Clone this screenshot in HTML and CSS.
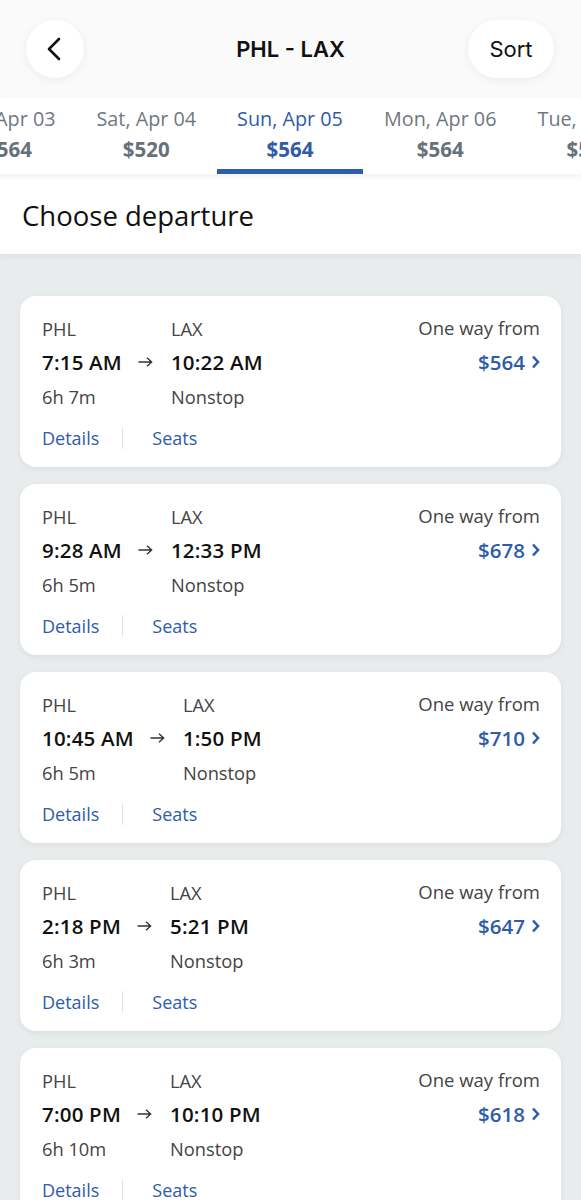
FILE: index.html
```html
<!DOCTYPE html>
<html>
<head>
<meta charset="utf-8">
<link rel="stylesheet" href="styles.css">
</head>
<body>
<div class="page">
  <header class="topbar">
    <button class="back" aria-label="Back">
      <svg width="20" height="26" viewBox="0 0 20 26"><path d="M14 3 L4 13 L14 23" fill="none" stroke="#111" stroke-width="2.6" stroke-linecap="round" stroke-linejoin="round"/></svg>
    </button>
    <div class="title">PHL - LAX</div>
    <button class="sort">Sort</button>
  </header>
  <nav class="tabs">
    <div class="tabtrack">
      <div class="tab"><span class="d">Fri, Apr 03</span><span class="p">$564</span></div>
      <div class="tab"><span class="d">Sat, Apr 04</span><span class="p">$520</span></div>
      <div class="tab active"><span class="d">Sun, Apr 05</span><span class="p">$564</span></div>
      <div class="tab"><span class="d">Mon, Apr 06</span><span class="p">$564</span></div>
      <div class="tab"><span class="d">Tue, Apr 07</span><span class="p">$564</span></div>
    </div>
  </nav>
  <section class="choose"><h1>Choose departure</h1></section>
  <main class="list">
    <div class="card">
      <div class="grid">
        <span class="code">PHL</span><span></span><span class="code">LAX</span>
        <span class="time">7:15 AM</span><span class="arrow"><svg width="15" height="10" viewBox="0 0 15 10"><path d="M0.5 5 H13.5 M9 0.8 L13.6 5 L9 9.2" fill="none" stroke="#333" stroke-width="1.4"/></svg></span><span class="time">10:22 AM</span>
        <span class="sub">6h 7m</span><span></span><span class="sub">Nonstop</span>
      </div>
      <div class="price"><span class="from">One way from</span><span class="amt">$564<svg width="9" height="14" viewBox="0 0 9 14"><path d="M2 1.5 L7 7 L2 12.5" fill="none" stroke="#2f5bab" stroke-width="2.6"/></svg></span></div>
      <div class="links"><span>Details</span><i></i><span>Seats</span></div>
    </div>
    <div class="card">
      <div class="grid">
        <span class="code">PHL</span><span></span><span class="code">LAX</span>
        <span class="time">9:28 AM</span><span class="arrow"><svg width="15" height="10" viewBox="0 0 15 10"><path d="M0.5 5 H13.5 M9 0.8 L13.6 5 L9 9.2" fill="none" stroke="#333" stroke-width="1.4"/></svg></span><span class="time">12:33 PM</span>
        <span class="sub">6h 5m</span><span></span><span class="sub">Nonstop</span>
      </div>
      <div class="price"><span class="from">One way from</span><span class="amt">$678<svg width="9" height="14" viewBox="0 0 9 14"><path d="M2 1.5 L7 7 L2 12.5" fill="none" stroke="#2f5bab" stroke-width="2.6"/></svg></span></div>
      <div class="links"><span>Details</span><i></i><span>Seats</span></div>
    </div>
    <div class="card">
      <div class="grid">
        <span class="code">PHL</span><span></span><span class="code">LAX</span>
        <span class="time">10:45 AM</span><span class="arrow"><svg width="15" height="10" viewBox="0 0 15 10"><path d="M0.5 5 H13.5 M9 0.8 L13.6 5 L9 9.2" fill="none" stroke="#333" stroke-width="1.4"/></svg></span><span class="time">1:50 PM</span>
        <span class="sub">6h 5m</span><span></span><span class="sub">Nonstop</span>
      </div>
      <div class="price"><span class="from">One way from</span><span class="amt">$710<svg width="9" height="14" viewBox="0 0 9 14"><path d="M2 1.5 L7 7 L2 12.5" fill="none" stroke="#2f5bab" stroke-width="2.6"/></svg></span></div>
      <div class="links"><span>Details</span><i></i><span>Seats</span></div>
    </div>
    <div class="card">
      <div class="grid">
        <span class="code">PHL</span><span></span><span class="code">LAX</span>
        <span class="time">2:18 PM</span><span class="arrow"><svg width="15" height="10" viewBox="0 0 15 10"><path d="M0.5 5 H13.5 M9 0.8 L13.6 5 L9 9.2" fill="none" stroke="#333" stroke-width="1.4"/></svg></span><span class="time">5:21 PM</span>
        <span class="sub">6h 3m</span><span></span><span class="sub">Nonstop</span>
      </div>
      <div class="price"><span class="from">One way from</span><span class="amt">$647<svg width="9" height="14" viewBox="0 0 9 14"><path d="M2 1.5 L7 7 L2 12.5" fill="none" stroke="#2f5bab" stroke-width="2.6"/></svg></span></div>
      <div class="links"><span>Details</span><i></i><span>Seats</span></div>
    </div>
    <div class="card">
      <div class="grid">
        <span class="code">PHL</span><span></span><span class="code">LAX</span>
        <span class="time">7:00 PM</span><span class="arrow"><svg width="15" height="10" viewBox="0 0 15 10"><path d="M0.5 5 H13.5 M9 0.8 L13.6 5 L9 9.2" fill="none" stroke="#333" stroke-width="1.4"/></svg></span><span class="time">10:10 PM</span>
        <span class="sub">6h 10m</span><span></span><span class="sub">Nonstop</span>
      </div>
      <div class="price"><span class="from">One way from</span><span class="amt">$618<svg width="9" height="14" viewBox="0 0 9 14"><path d="M2 1.5 L7 7 L2 12.5" fill="none" stroke="#2f5bab" stroke-width="2.6"/></svg></span></div>
      <div class="links"><span>Details</span><i></i><span>Seats</span></div>
    </div>
  </main>
</div>
</body>
</html>
```
FILE: styles.css
```css
* { box-sizing: border-box; }
html, body { margin: 0; padding: 0; }
body {
  width: 581px;
  height: 1200px;
  overflow: hidden;
  background: #e9eced;
  font-family: "Open Sans", "Noto Sans", sans-serif;
}
.page { width: 581px; }
.topbar {
  height: 98px;
  background: #fafafa;
  display: flex;
  align-items: center;
  justify-content: space-between;
  padding: 0 27px 0 26px;
  position: relative;
}
.back {
  width: 58px; height: 58px;
  border-radius: 50%;
  border: none;
  background: #fff;
  box-shadow: 0 2px 10px rgba(0,0,0,0.06);
  display: flex; align-items: center; justify-content: center;
  padding: 0;
}
.title {
  font-family: Inter, "Liberation Sans", sans-serif;
  font-weight: 600;
  font-size: 22px;
  color: #111;
  position: absolute;
  left: 0; right: 0;
  text-align: center;
  pointer-events: none;
}
.sort {
  width: 86px; height: 58px;
  border-radius: 29px;
  border: none;
  background: #fff;
  box-shadow: 0 2px 10px rgba(0,0,0,0.06);
  font-family: Inter, "Liberation Sans", sans-serif;
  font-size: 22px;
  color: #111;
  padding: 0;
}
.tabs {
  height: 76px;
  background: #fff;
  overflow: hidden;
  position: relative;
  box-shadow: 0 3px 6px rgba(0,0,0,0.06);
  z-index: 2;
}
.tabtrack {
  display: flex;
  margin-left: -59px;
  width: 800px;
}
.tab {
  flex: none;
  height: 76px;
  display: flex;
  flex-direction: column;
  align-items: center;
  padding: 7px 20.5px 0;
  color: #6f7880;
}
.tab .d { font-size: 19.8px; line-height: 28px; white-space: nowrap; }
.tab .p { font-size: 20.5px; font-weight: 700; line-height: 33px; color: #66717b; }
.tab.active { border-bottom: 5px solid #2f5bab; }
.tab.active .d, .tab.active .p { color: #2f5bab; }
.choose {
  height: 80px;
  background: #fff;
  padding: 0 22px;
  display: flex;
  align-items: center;
  box-shadow: 0 3px 6px rgba(0,0,0,0.05);
  position: relative;
  z-index: 1;
}
.choose h1 {
  margin: 0;
  font-size: 27.5px;
  font-weight: 400;
  color: #111;
  margin-top: 2px;
}
.list {
  padding: 42px 20px 0;
  display: flex;
  flex-direction: column;
  gap: 17px;
}
.card {
  background: #fff;
  border-radius: 16px;
  height: 171px;
  padding: 15px 21px 0 22px;
  box-shadow: 0 2px 6px rgba(0,0,0,0.06);
  display: grid;
  grid-template-columns: 1fr auto;
  grid-template-rows: auto auto;
  align-content: start;
  color: #222;
}
.grid {
  display: grid;
  grid-template-columns: auto 49px auto;
  grid-auto-rows: 34px;
  align-items: center;
  justify-content: start;
}
.code { font-size: 18.3px; color: #444; }
.sub { font-size: 18.3px; color: #444; }
.time { font-size: 20.5px; font-weight: 600; color: #111; letter-spacing: 0.2px; }
.arrow { display: flex; justify-content: center; align-items: center; padding-right: 2px; }
.price {
  display: flex;
  flex-direction: column;
  align-items: flex-end;
}
.price .from { font-size: 18.5px; color: #444; line-height: 34px; }
.price .amt {
  font-size: 20.5px; font-weight: 600; color: #2f5bab; line-height: 34px;
  display: flex; align-items: center; gap: 6px;
}
.links {
  grid-column: 1 / 3;
  display: flex;
  align-items: center;
  margin-top: 11px;
  font-size: 18px;
  color: #2f5bab;
  height: 28px;
}
.links i {
  width: 1px;
  height: 22px;
  background: #e2e5e8;
  margin: 0 29px 0 23px;
}
```
